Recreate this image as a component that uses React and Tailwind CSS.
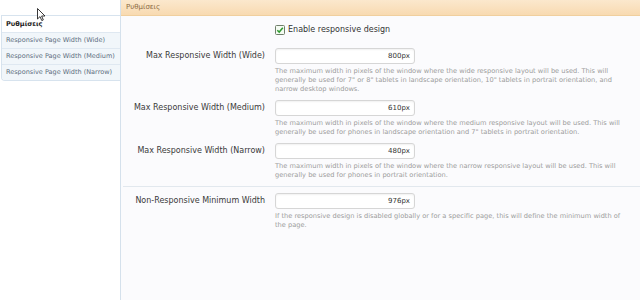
export default function App() {
  const rows = [
    {
      label: "Max Responsive Width (Wide)",
      value: "800px",
      desc: [
        "The maximum width in pixels of the window where the wide responsive layout will be used. This will",
        "generally be used for 7\" or 8\" tablets in landscape orientation, 10\" tablets in portrait orientation, and",
        "narrow desktop windows.",
      ],
    },
    {
      label: "Max Responsive Width (Medium)",
      value: "610px",
      desc: [
        "The maximum width in pixels of the window where the medium responsive layout will be used. This will",
        "generally be used for phones in landscape orientation and 7\" tablets in portrait orientation.",
      ],
    },
    {
      label: "Max Responsive Width (Narrow)",
      value: "480px",
      desc: [
        "The maximum width in pixels of the window where the narrow responsive layout will be used. This will",
        "generally be used for phones in portrait orientation.",
      ],
    },
  ];

  const Row = ({ label, value, desc, className = "" }) => (
    <div className={"flex " + className}>
      <div className="w-[144px] shrink-0 text-right text-[8px] leading-[16px] text-[#3a3a3a]">{label}</div>
      <div className="ml-[10px]">
        <div className="w-[140px] h-[16px] border border-[#d6d6d6] rounded-[3px] bg-white text-right pr-[4px] text-[7px] leading-[14px] text-[#333] shadow-[inset_0_1px_2px_rgba(0,0,0,0.06)]">
          {value}
        </div>
        <div className="mt-[3px] text-[6.65px] leading-[9px] text-[#9c9c9c] whitespace-nowrap">
          {desc.map((d, i) => (
            <div key={i}>{d}</div>
          ))}
        </div>
      </div>
    </div>
  );

  return (
    <div className="relative w-[640px] h-[300px] flex bg-white overflow-hidden font-['DejaVu_Sans',sans-serif]">
      <aside className="w-[120px] shrink-0 pt-[15px] pl-[1px]">
        <div className="border border-r-0 border-[#d7e3ee] rounded-bl-[4px] bg-white overflow-hidden">
          <div className="h-[16px] px-[4px] text-[6.6px] font-semibold leading-[17px] text-[#222]">Ρυθμίσεις</div>
          {["Responsive Page Width (Wide)", "Responsive Page Width (Medium)", "Responsive Page Width (Narrow)"].map((t) => (
            <div key={t} className="h-[16px] border-t border-[#dfe8f1] bg-[#f1f6fa] px-[4px] text-[6.5px] leading-[15px] text-[#5d6e80]">
              {t}
            </div>
          ))}
        </div>
      </aside>
      <main className="flex-1 border-l border-[#d5e1ec] bg-[#fbfbfd] flex flex-col">
        <div className="h-[16px] bg-gradient-to-b from-[#fbe8cd] to-[#f8dab1] border-b border-[#f0cf9e] px-[5px] text-[7px] leading-[15px] text-[#8a6a42]">
          Ρυθμίσεις
        </div>
        <div className="pt-[9px] flex flex-col">
          <div className="flex items-center ml-[154px] h-[10px]">
            <svg width="10" height="10" viewBox="0 0 10 10">
              <rect x="0.5" y="0.5" width="9" height="9" rx="1" fill="#f4fbf2" stroke="#6f7f6a" />
              <path d="M2.3 5.2 L4.2 7.1 L7.8 2.8" fill="none" stroke="#2f9a2f" strokeWidth="1.5" />
            </svg>
            <span className="ml-[3px] text-[8px] leading-[10px] text-[#333]">Enable responsive design</span>
          </div>
          <Row {...rows[0]} className="mt-[13px]" />
          <Row {...rows[1]} className="mt-[6px]" />
          <Row {...rows[2]} className="mt-[6px]" />
          <div className="mt-[6px] ml-[2px] border-t border-[#e2e8ee]" />
          <Row
            className="mt-[6px]"
            label="Non-Responsive Minimum Width"
            value="976px"
            desc={[
              "If the responsive design is disabled globally or for a specific page, this will define the minimum width of",
              "the page.",
            ]}
          />
        </div>
      </main>
      <svg className="absolute left-[37px] top-[8px]" width="9" height="14" viewBox="0 0 9 14">
        <path d="M0.5 0.5 L0.5 11 L3 8.6 L4.8 12.6 L6.3 11.9 L4.6 8 L8 8 Z" fill="#fff" stroke="#222" strokeWidth="0.9" strokeLinejoin="round" />
      </svg>
    </div>
  );
}
